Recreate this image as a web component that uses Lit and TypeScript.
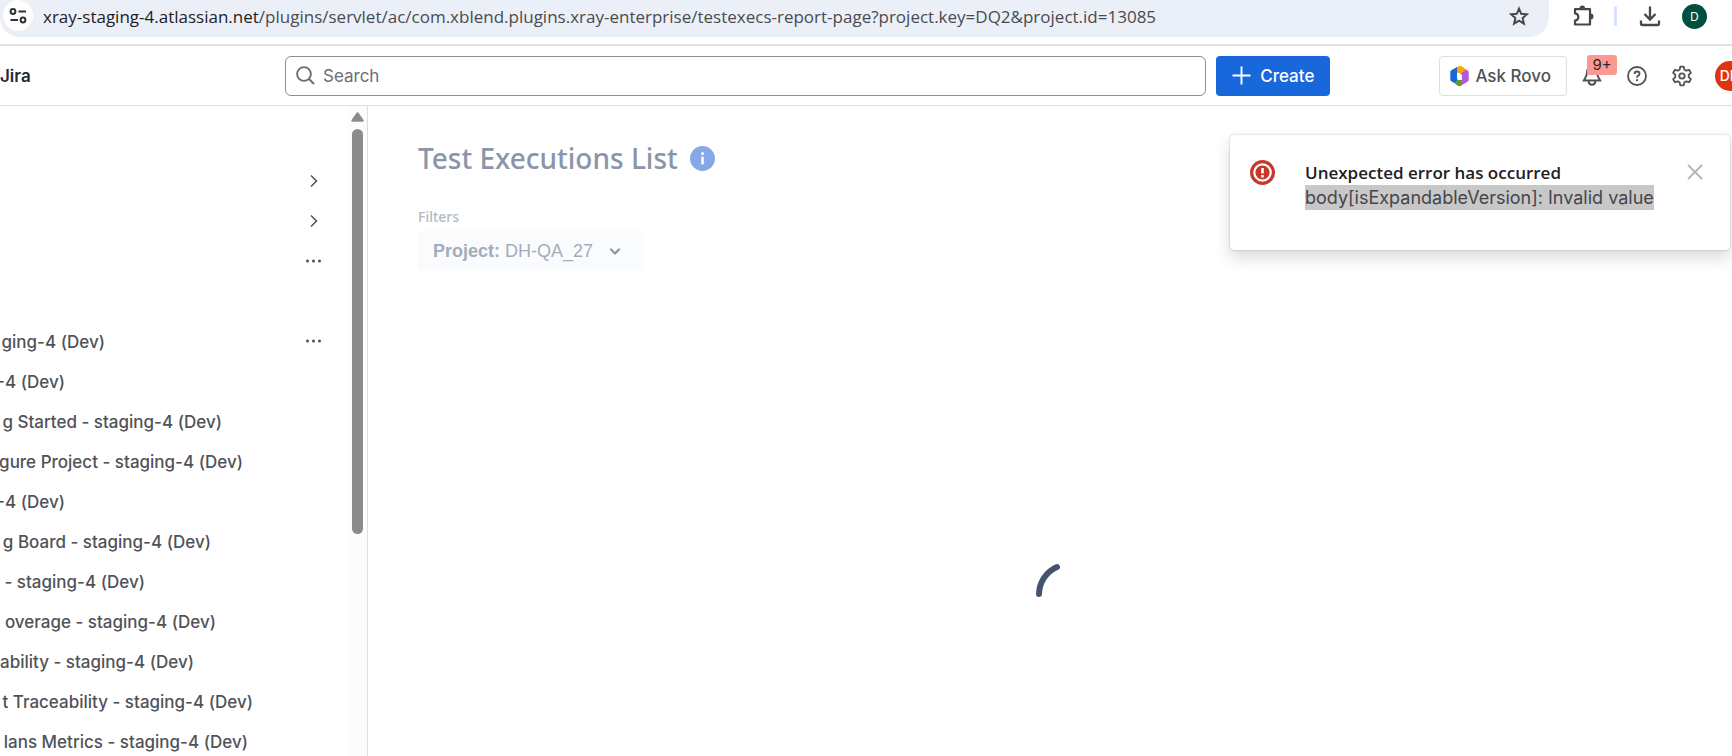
import { LitElement, html, css, svg } from "lit";
import { customElement } from "lit/decorators.js";
import { styleMap } from "lit/directives/style-map.js";

interface NavRow {
  label: string;
  end: number;
  action?: "expand" | "more";
}

// `end` is where the label's right edge falls once the sidebar is scrolled sideways.
const ROWS: NavRow[] = [
  { label: "", end: 0, action: "expand" },
  { label: "", end: 0, action: "expand" },
  { label: "", end: 0, action: "more" },
  { label: "", end: 0 },
  { label: "ging-4 (Dev)", end: 105, action: "more" },
  { label: "-4 (Dev)", end: 65 },
  { label: "g Started - staging-4 (Dev)", end: 222 },
  { label: "gure Project - staging-4 (Dev)", end: 243 },
  { label: "-4 (Dev)", end: 65 },
  { label: "g Board - staging-4 (Dev)", end: 211 },
  { label: "- staging-4 (Dev)", end: 145 },
  { label: "overage - staging-4 (Dev)", end: 216 },
  { label: "ability - staging-4 (Dev)", end: 194 },
  { label: "t Traceability - staging-4 (Dev)", end: 253 },
  { label: "lans Metrics - staging-4 (Dev)", end: 248 },
];

const reset = css`
  * { box-sizing: border-box; }
  button { font: inherit; color: inherit; background: none; border: 0; padding: 0; cursor: pointer; }
  svg { display: block; flex: none; }
`;

@customElement("browser-bar")
export class BrowserBar extends LitElement {
  static styles = [reset, css`
    :host { display: block; }
    .bar { display: flex; align-items: flex-start; height: 46px; border-bottom: 2px solid #e1e1e1; background: #fff; }
    .omnibox { flex: 1; min-width: 0; height: 37px; display: flex; align-items: center; padding: 0 20px 6px 3px; background: #ebeff8; border-radius: 0 0 20px 20px; }
    .site { flex: none; width: 30px; height: 31px; border-radius: 50%; background: #fff; display: grid; place-items: center; }
    .url { flex: 1; min-width: 0; margin-left: 10px; padding-top: 2px; font: 17px/24px "Segoe UI", "Open Sans", sans-serif; color: #4a4b4e; white-space: nowrap; overflow: hidden; }
    .host { color: #1f2023; }
    .tools { display: flex; align-items: center; height: 32px; padding: 0 25px 0 24px; color: #474747; }
    .rule { width: 3px; height: 20px; margin: 0 22px 0 20px; background: #d3e3fd; border-radius: 2px; }
    .user { width: 25px; height: 25px; margin-left: 21px; border-radius: 50%; background: #00503f; color: #fff; font: 12px/25px "Noto Sans", sans-serif; }
  `];
  render() {
    return html`<div class="bar">
      <div class="omnibox">
        <button class="site" aria-label="Site information">
          <svg width="18" height="18" viewBox="0 0 18 18" fill="none" stroke="#333" stroke-width="2"><circle cx="4" cy="4.500" r="2.400"/><path d="M9.500 4.500H17M1.500 13H9"/><circle cx="14" cy="13" r="2.400"/></svg>
        </button>
        <div class="url"><span class="host">xray-staging-4.atlassian.net</span>/plugins/servlet/ac/com.xblend.plugins.xray-enterprise/testexecs-report-page?project.key=DQ2&amp;project.id=13085</div>
        <button aria-label="Bookmark">
          <svg width="20" height="20" viewBox="0 0 20 20" fill="none" stroke="#474747" stroke-width="2"><path d="M10 2.600l2.200 5.200 5.700.5-4.300 3.700 1.300 5.600-4.900-3-4.900 3 1.300-5.600-4.300-3.700 5.700-.5z"/></svg>
        </button>
      </div>
      <div class="tools">
        <button aria-label="Extensions">
          <svg width="21" height="22" viewBox="0 0 21 22"><path d="M2 4.200H17V19.500H2V15.600C6.500 15 6.500 9 2 8.300Z" fill="none" stroke="currentColor" stroke-width="2.200" stroke-linejoin="round"/><path d="M6.500 3.500a2.800 3 0 0 1 5.600 0zM17.500 8.600a3 3 0 0 1 0 6z" fill="currentColor"/></svg>
        </button>
        <span class="rule"></span>
        <button aria-label="Downloads">
          <svg width="22" height="22" viewBox="0 0 22 22" fill="none" stroke="currentColor" stroke-width="2.300"><path d="M11 1.500V14M5.500 9l5.500 5.500L16.500 9M2 15.500V18.500Q2 20 3.500 20H18.500Q20 20 20 18.500V15.500"/></svg>
        </button>
        <button class="user" aria-label="Profile">D</button>
      </div>
    </div>`;
  }
}

@customElement("jira-header")
export class JiraHeader extends LitElement {
  static styles = [reset, css`
    :host { display: block; font: 17px/24px Inter, sans-serif; color: #505258; }
    .header { display: flex; align-items: center; height: 60px; border-bottom: 1px solid #dddee1; overflow: hidden; }
    .brand { width: 285px; flex: none; font-weight: 600; color: #292a2e; }
    .search { flex: 1; min-width: 0; height: 40px; display: flex; align-items: center; gap: 8px; padding: 0 10px; border: 1px solid #8c8f97; border-radius: 6px; }
    .search input { flex: 1; min-width: 0; border: 0; outline: 0; padding: 0; background: none; font: inherit; color: #292a2e; }
    .search input::placeholder { color: #6b6e76; opacity: 1; }
    .create { display: flex; align-items: center; gap: 9px; height: 40px; margin-left: 10px; padding: 0 16px; border-radius: 4px; background: #1868db; color: #fff; font-weight: 500; }
    .right { display: flex; align-items: center; margin-left: 109px; }
    .rovo { display: flex; align-items: center; gap: 6px; height: 40px; padding: 0 15px 0 10px; border: 1px solid #dddee1; border-radius: 4px; font-weight: 500; }
    .bell { position: relative; margin-left: 15px; }
    .badge { position: absolute; left: 5px; top: -11px; width: 30px; height: 20px; border-radius: 3px; background: #fd9891; color: #292a2e; font: 15px/20px Inter, sans-serif; text-align: center; }
    .help { margin-left: 25px; }
    .gear { margin-left: 24px; }
    .avatar { flex: none; width: 30px; height: 30px; margin: 0 -13px 0 22px; border-radius: 50%; background: #de350b; color: #fff; font: 500 14px/30px Inter, sans-serif; }
  `];
  render() {
    return html`<header class="header">
      <div class="brand">Jira</div>
      <label class="search">
        <svg width="19" height="19" viewBox="0 0 19 19" fill="none" stroke="#6b6e76" stroke-width="1.900"><circle cx="8" cy="8" r="6.900"/><path d="M13 13l5 5"/></svg>
        <input type="text" placeholder="Search" aria-label="Search" />
      </label>
      <button class="create">
        <svg width="19" height="19" viewBox="0 0 19 19" stroke="#fff" stroke-width="1.900"><path d="M9.500 .5v18M.5 9.500h18"/></svg>Create
      </button>
      <div class="right">
        <button class="rovo">
          <svg width="19" height="22" viewBox="0 0 19 22"><path d="M7 2L1.300 5.300Q.3 6 .3 7V14.500Q.3 15.700 1.300 16.300L4.200 18 8.300 15.500Q7 14.500 7 13V7.500Z" fill="#1868db"/><path d="M12.500 6L14.500 3.800 17.700 5.600Q18.700 6.200 18.700 7.300V15Q18.700 16 17.700 16.600L12 20V10.500L8.300 8.300Z" fill="#af59e1"/><path d="M7 2Q9.500 0 12 1.600L14.800 3.500V6L10.800 8.300 7 7.800Z" fill="#fca700"/><path d="M4 17.700L8.300 15 12 14.800V20Q9.500 22.300 7 20.300Z" fill="#6a9a23"/><path d="M7.200 8L10.200 8.300Q11.900 9.300 11.900 11V14.600L8.800 14.900Q7.200 14 7.200 12.500Z" fill="#fff"/></svg>
          Ask Rovo
        </button>
        <button class="bell" aria-label="Notifications">
          <svg width="20" height="20" viewBox="0 0 20 20" fill="none" stroke="currentColor" stroke-width="1.900"><path d="M10 1C6.500 1 5 3.500 5 6.500 5 10 3.500 11.500 1.800 14.500H18.200C16.500 11.500 15 10 15 6.500 15 3.500 13.500 1 10 1ZM6.500 15.500Q7 18.800 10 18.800T13.500 15.500"/></svg>
          <span class="badge">9+</span>
        </button>
        <button class="help" aria-label="Help">
          <svg width="20" height="20" viewBox="0 0 20 20" fill="none" stroke="currentColor" stroke-width="1.800"><circle cx="10" cy="10" r="9"/><path d="M7.500 8Q7.500 5.500 10 5.500T12.500 7.800Q12.500 9.200 11 9.900 10 10.400 10 11.800"/><circle cx="10" cy="14.200" r="1.100" fill="currentColor" stroke="none"/></svg>
        </button>
        <button class="gear" aria-label="Settings">
          <svg width="22" height="22" viewBox="0 0 22 22" fill="none" stroke="currentColor" stroke-width="1.800" stroke-linejoin="round"><path d="M9.300 1.700H12.700L13.400 4.700 15.200 5.700 18.100 4.800 19.800 7.800 17.700 9.900V12.100L19.800 14.200 18.100 17.200 15.200 16.300 13.400 17.300 12.700 20.300H9.300L8.600 17.300 6.800 16.300 3.900 17.200 2.200 14.200 4.300 12.100V9.900L2.200 7.800 3.900 4.800 6.800 5.700 8.600 4.700Z"/><circle cx="11" cy="11" r="2.700"/></svg>
        </button>
        <button class="avatar" aria-label="Account">DH</button>
      </div>
    </header>`;
  }
}

@customElement("side-nav")
export class SideNav extends LitElement {
  static styles = [reset, css`
    :host { display: flex; flex: none; width: 368px; border-right: 1px solid #dddee1; font: 500 17px/24px Inter, sans-serif; color: #505258; }
    .list { flex: 1; min-width: 0; margin: 0; padding: 55px 24px 0 0; list-style: none; }
    .row { display: flex; align-items: center; justify-content: space-between; height: 40px; }
    .label { display: flex; justify-content: flex-end; padding-top: 1px; white-space: nowrap; color: inherit; text-decoration: none; }
    .action { display: block; }
    .scroll { width: 19px; flex: none; display: flex; flex-direction: column; align-items: center; gap: 7px; padding-top: 6px; background: #fcfcfc; }
    .thumb { width: 11px; height: 405px; border-radius: 6px; background: #8b8b8b; }
  `];
  render() {
    const chevron = svg`<path d="M7 4.500l5.500 5.500L7 15.500" fill="none" stroke="currentColor" stroke-width="1.500"/>`;
    const dots = svg`<circle cx="3.500" cy="10" r="1.500"/><circle cx="9.500" cy="10" r="1.500"/><circle cx="15.500" cy="10" r="1.500"/>`;
    return html`<ul class="list">
        ${ROWS.map((r) => html`<li class="row">
          ${r.label ? html`<a class="label" href="#" style=${styleMap({ width: `${r.end}px` })}>${r.label}</a>` : html`<span></span>`}
          ${r.action ? html`<button class="action" aria-label=${r.action === "expand" ? "Expand" : "More actions"}>
            <svg width="20" height="20" viewBox="0 0 20 20" fill="currentColor">${r.action === "expand" ? chevron : dots}</svg></button>` : ""}
        </li>`)}
      </ul>
      <div class="scroll">
        <svg width="13" height="10" viewBox="0 0 13 10"><path d="M5.500.8Q6.500-.3 7.500.8L12.500 8Q13 9.800 11.500 9.800H1.500Q0 9.800.5 8Z" fill="#8b8b8b"/></svg>
        <div class="thumb"></div>
      </div>`;
  }
}

@customElement("error-toast")
export class ErrorToast extends LitElement {
  static styles = [reset, css`
    :host { display: block; }
    .toast { display: flex; align-items: flex-start; width: 500px; height: 115px; padding: 25px 27px 0 20px; border-radius: 4px; background: #fff; box-shadow: 0 0 2px rgba(30, 31, 33, 0.3), 0 8px 16px rgba(30, 31, 33, 0.16); }
    .text { flex: 1; margin-left: 30px; font: 18px/25px Inter, sans-serif; color: #44464b; }
    .title { font: 600 17px/25px "Segoe UI", "Open Sans", sans-serif; color: #1f2024; }
    .body { display: inline-block; background: #c8c8c8; }
    .close { margin-top: 4px; color: #b3b5bb; }
  `];
  render() {
    return html`<div class="toast" role="alert">
      <svg width="25" height="25" viewBox="0 0 25 25"><circle cx="12.500" cy="12.500" r="12.500" fill="#c9372c"/><circle cx="12.500" cy="12.500" r="8.200" fill="none" stroke="#fff" stroke-width="2.200"/><path d="M12.500 8v5.500M12.500 15v2.500" stroke="#fff" stroke-width="2.600"/></svg>
      <div class="text">
        <div class="title">Unexpected error has occurred</div>
        <span class="body">body[isExpandableVersion]: Invalid value</span>
      </div>
      <button class="close" aria-label="Dismiss"><svg width="16" height="16" viewBox="0 0 16 16" stroke="currentColor" stroke-width="1.900"><path d="M1 1l14 14M15 1L1 15"/></svg></button>
    </div>`;
  }
}

@customElement("app-root")
export class AppRoot extends LitElement {
  static styles = [reset, css`
    :host { display: flex; flex-direction: column; height: 100vh; overflow: hidden; background: #fff; }
    .body { flex: 1; min-height: 0; display: flex; overflow: hidden; }
    .main { position: relative; flex: 1; min-width: 0; padding: 32px 0 0 50px; font-family: "Segoe UI", "Noto Sans", sans-serif; }
    .heading { display: flex; align-items: center; gap: 12px; }
    h1 { margin: 0; font-size: 28px; line-height: 40px; font-weight: 500; color: #8b95a8; }
    .filters { margin-top: 27px; font-size: 14px; line-height: 24px; color: #b2b8c4; font-weight: 500; }
    .project { display: flex; align-items: center; justify-content: space-between; width: 226px; height: 40px; margin-top: 2px; padding: 0 19px 0 15px; border-radius: 4px; background: #fafbfd; color: #a3acbb; font: 18px/24px "Liberation Sans", Arial, sans-serif; }
    .loading { display: flex; justify-content: center; padding: 285px 12px 0 0; }
    .toast { position: absolute; top: 29px; right: 2px; }
  `];
  render() {
    return html`<browser-bar></browser-bar>
      <jira-header></jira-header>
      <div class="body">
        <side-nav></side-nav>
        <main class="main">
          <div class="heading">
            <h1>Test Executions List</h1>
            <svg width="25" height="25" viewBox="0 0 25 25"><circle cx="12.500" cy="12.500" r="12.500" fill="#85a9e8"/><rect x="11.200" y="10.500" width="2.600" height="8" rx="1.200" fill="#fff"/><circle cx="12.500" cy="7.500" r="1.500" fill="#fff"/></svg>
          </div>
          <div class="filters">Filters</div>
          <button class="project" aria-haspopup="listbox"><span><b>Project:</b> DH-QA_27</span>
            <svg width="20" height="20" viewBox="0 0 20 20" fill="none" stroke="#8b95a8" stroke-width="2.300" stroke-linecap="round" stroke-linejoin="round"><path d="M6 8.500l4 4 4-4"/></svg>
          </button>
          <div class="loading" role="status" aria-label="Loading">
            <svg width="72" height="72" viewBox="0 0 72 72" fill="none" stroke="#44546f" stroke-width="6" stroke-linecap="round"><path d="M6 38A30 30 0 0 1 24 11"/></svg>
          </div>
          <error-toast class="toast"></error-toast>
        </main>
      </div>`;
  }
}
